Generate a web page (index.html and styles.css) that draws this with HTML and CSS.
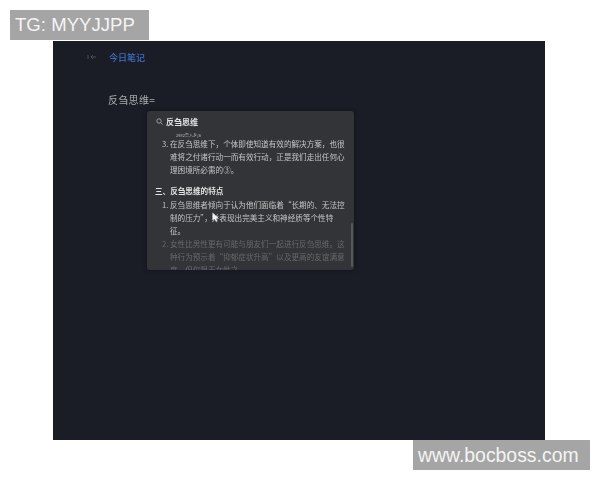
FILE: index.html
```html
<!DOCTYPE html>
<html lang="zh-CN">
<head>
    <meta charset="UTF-8">
    <title>今日笔记</title>
    <link rel="stylesheet" href="styles.css">
</head>
<body>

<div class="tag tag-top">TG: MYYJJPP</div>

<div class="screen">
    <div class="note-head">
        <svg class="back" width="10" height="6" viewBox="0 0 10 6"><path d="M1 1v4M4 3h5M6 1L4 3l2 2" fill="none" stroke="#4a4f5a" stroke-width="1"/></svg>
        <span class="note-title">今日笔记</span>
    </div>
    <div class="note-line">反刍思维=</div>

    <!-- search popup over the note -->
    <div class="popup">
        <div class="search">
            <svg width="7" height="7" viewBox="0 0 7 7"><circle cx="3" cy="3" r="2.2" fill="none" stroke="#b4b4b4" stroke-width="0.8"/><path d="M4.6 4.6L6.6 6.6" stroke="#b4b4b4" stroke-width="0.8"/></svg>
            <span>反刍思维</span>
        </div>
        <div class="results">
            <div class="tiny">2982鲁入乡/a</div>
            <ol class="list" start="3">
                <li>在反刍思维下，个体即使知道有效的解决方案，也很难将之付诸行动一而有效行动，正是我们走出任何心理困境所必需的③。</li>
            </ol>
            <div class="section">三、反刍思维的特点</div>
            <ol class="list">
                <li>反刍思维者倾向于认为他们面临着“长期的、无法控制的压力”，并表现出完美主义和神经质等个性特征。</li>
                <li class="dim">女性比男性更有可能与朋友们一起进行反刍思维。这种行为预示着“抑郁症状升高”以及更高的友谊满意度，但仅限于女性之。</li>
            </ol>
        </div>
        <div class="scrollbar"></div>
        <svg class="cursor" width="7" height="10" viewBox="0 0 7 10"><path d="M0.5 0.5v8l2-1.8 1.4 3 1.3-.6-1.3-2.9h2.6z" fill="#f2f2f2"/></svg>
    </div>
</div>

<div class="tag tag-bottom">www.bocboss.com</div>

</body>
</html>
```

FILE: styles.css
```css
* {
    box-sizing: border-box;
}
body {
    margin: 0;
    padding-top: 10px;
    background: #fff;
    font-family: "Noto Sans CJK SC", "Liberation Sans", sans-serif;
}
.tag {
    height: 30px;
    background: #a5a5a5;
    color: #f4f4f4;
    font-family: "Liberation Sans", Arial, sans-serif;
    line-height: 30px;
}
.tag-top {
    width: 139px;
    margin-left: 10px;
    padding-left: 5px;
    font-size: 18.6px;
}
.tag-bottom {
    width: 177px;
    margin-left: 413px;
    padding-left: 5px;
    font-size: 19.4px;
}
.screen {
    position: relative;
    width: 492px;
    height: 399px;
    margin: 1px 0 0 53px;
    background: #1a1d26;
    padding: 9px 0 0 34px;
}
.note-head {
    display: flex;
    align-items: center;
    gap: 12px;
    height: 14px;
    filter: blur(0.3px);
}
.note-title {
    color: #3f6fc4;
    font-size: 9px;
    font-weight: 500;
}
.note-line {
    margin: 29px 0 0 21px;
    color: #a9abae;
    font-size: 10px;
    letter-spacing: 0.3px;
    line-height: 14px;
    filter: blur(0.3px);
}
.popup {
    position: absolute;
    left: 94px;
    top: 70px;
    width: 207px;
    height: 159px;
    background: #323437;
    border-radius: 3px;
    overflow: hidden;
    box-shadow: 0 0 4px rgba(0, 0, 0, 0.4);
}
.search {
    display: flex;
    align-items: center;
    gap: 3px;
    height: 21px;
    padding-left: 9px;
    color: #e0e0e0;
    font-size: 8px;
    font-weight: 700;
    filter: blur(0.3px);
}
.results {
    padding: 0 6px 0 8px;
    color: #c4c5c6;
    font-size: 7.6px;
    line-height: 13px;
    filter: blur(0.3px);
}
.tiny {
    margin-left: 21px;
    color: #b8b8b8;
    font-size: 4px;
    line-height: 6px;
    height: 5px;
}
.list {
    margin: 0;
    padding-left: 15px;
}
.section {
    margin: 8px 0 1px;
    color: #e2e2e2;
    font-weight: 700;
}
.dim {
    color: #66686a;
}
.scrollbar {
    position: absolute;
    right: 1px;
    top: 112px;
    width: 2px;
    height: 44px;
    background: #55575a;
    border-radius: 1px;
}
.cursor {
    position: absolute;
    left: 65px;
    top: 101px;
}
```
